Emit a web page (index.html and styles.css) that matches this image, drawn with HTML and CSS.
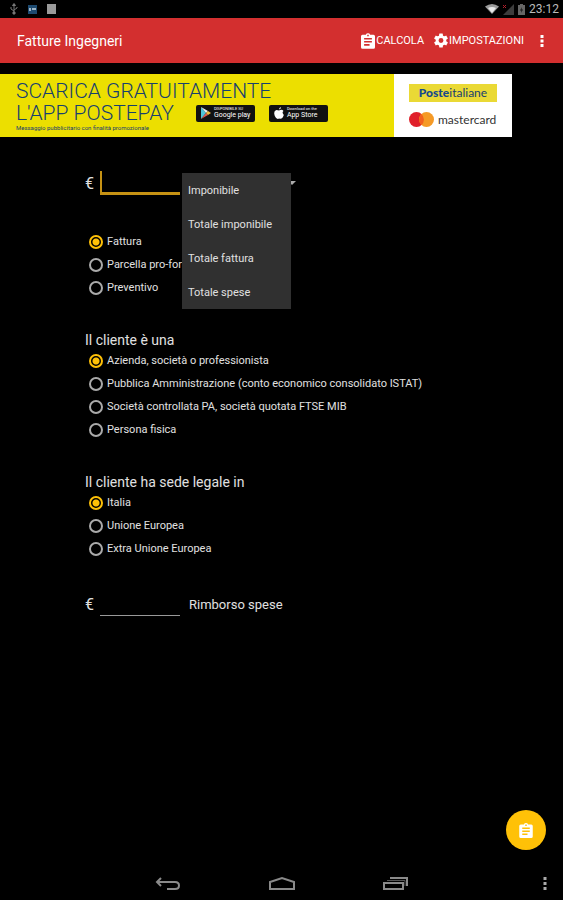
FILE: index.html
```
<!doctype html>
<html lang="it">
<head>
  <meta charset="UTF-8" />
  <meta name="viewport" content="width=device-width, initial-scale=1.0" />
  <title>Fatture Ingegneri</title>
  <link rel="stylesheet" href="styles.css">
</head>
<body>
  <div class="statusbar">
    <div class="status-group">
      <svg width="8" height="12" viewBox="0 0 8 12" fill="none" stroke="#777" stroke-width="1"><path d="M4 1v10M1 4v2l3 2M7 4v1L4 7" /><path d="M2.500 2.500L4 .5l1.500 2zM3 9h2v2H3z" fill="#777" /></svg>
      <svg width="9" height="9" viewBox="0 0 9 9"><path fill="#1d4a70" d="M0 0h9v9H0z" /><path fill="#9db4c6" d="M1 3h2v3H1zM4 3h4v2H4z" /></svg>
      <svg width="9" height="10" viewBox="0 0 9 10"><path fill="#9a9a9a" d="M0 0h9v10H0z" /></svg>
    </div>
    <div class="status-group status-right">
      <svg width="14" height="10" viewBox="0 0 14 10"><path fill="#999" d="M0 2.500Q7-2.500 14 2.500L7 10z" /><path fill="#e8e8e8" d="M3 4q4-2 8 0L7 9z" /></svg>
      <svg width="11" height="11" viewBox="0 0 11 11"><path fill="#3c3c3c" d="M11 0v11H0z" /><path stroke="#b3202c" d="M0 1l3 3M3 1L0 4" /></svg>
      <svg width="7" height="11" viewBox="0 0 7 11"><path fill="#666" d="M2 0h3v1h2v10H0V1h2z" /><path fill="#111" d="M4 3L2 6.500h1.500L3 9l2-3.500H3.500z" /></svg>
      <span class="clock">23:12</span>
    </div>
  </div>

  <header class="appbar">
    <h1>Fatture Ingegneri</h1>
    <button class="action" type="button">
      <svg width="14" height="16" viewBox="3 1 18 20"><path fill="#fff" d="M19 3h-4.200a3 3 0 0 0-5.600 0H5a2 2 0 0 0-2 2v14a2 2 0 0 0 2 2h14a2 2 0 0 0 2-2V5a2 2 0 0 0-2-2z" /><path fill="#d32f2f" d="M11 3h2v2h-2zM7 7h10v2H7zM7 11h10v2H7zM7 15h7v2H7z" /></svg>Calcola
    </button>
    <button class="action" type="button">
      <svg width="14" height="15" viewBox="2 2 20 20"><path fill="#fff" d="M19.430 12.980c.04-.32.07-.64.07-.98s-.03-.66-.07-.98l2.110-1.650a.5.5 0 0 0 .12-.64l-2-3.460a.5.500 0 0 0-.61-.22l-2.490 1a7.300 7.300 0 0 0-1.690-.98l-.38-2.650A.5.500 0 0 0 14 2h-4a.5.5 0 0 0-.49.42l-.38 2.650c-.61.25-1.170.59-1.690.98l-2.490-1a.5.5 0 0 0-.61.22l-2 3.460a.5.5 0 0 0 .12.640l2.110 1.650c-.04.32-.07.65-.07.98s.03.66.07.98l-2.110 1.650a.5.5 0 0 0-.12.640l2 3.460c.12.22.39.3.61.22l2.490-1c.52.4 1.080.73 1.690.98l.38 2.650c.03.24.24.42.49.42h4c.25 0 .46-.18.49-.42l.38-2.650c.61-.25 1.170-.59 1.690-.98l2.490 1c.23.09.49 0 .61-.22l2-3.460a.5.5 0 0 0-.12-.64zM12 15.500a3.500 3.500 0 1 1 0-7 3.500 3.500 0 0 1 0 7z" /></svg>Impostazioni
    </button>
    <button class="more" type="button" aria-label="Altro">
      <svg width="4" height="12" viewBox="0 0 4 12" fill="#fff"><path d="M.5 0h3v3h-3zM.5 4.500h3v3h-3zM.5 9h3v3h-3z" /></svg>
    </button>
  </header>

  <a class="banner" href="#">
    <span class="promo">
      <span class="promo-line">SCARICA GRATUITAMENTE</span>
      <span class="promo-line">L'APP POSTEPAY
        <span class="store">
          <svg width="10" height="12" viewBox="0 0 10 12"><path fill="#4fc3d9" d="M0 0v12l5-6z" /><path fill="#e0574f" d="M0 12l5-6 2 2z" /><path fill="#e9eef0" d="M0 0l7 4-2 2z" /><path fill="#f0b840" d="M7 4l3 2-3 2-2-2z" /></svg>
          <span class="store-text"><small>DISPONIBILE SU</small><span>Google play</span></span>
        </span>
        <span class="store">
          <svg width="10" height="12" viewBox="0 0 10 12" fill="#fff"><path d="M7 0q0 2-2 2.500Q5 .5 7 0zM5 3.500Q8 2 9.500 4 7.500 5.500 9.800 8 8 13 5.200 11.500 2.500 13 .8 9-1 4 2.500 3q1.500 0 2.500.5z" /></svg>
          <span class="store-text"><small>Download on the</small><span>App Store</span></span>
        </span>
      </span>
      <span class="promo-note">Messaggio pubblicitario con finalità promozionale</span>
    </span>
    <span class="brands">
      <span class="poste"><b>Poste</b>italiane</span>
      <span class="mastercard">
        <svg width="25" height="15" viewBox="0 0 25 15"><circle cx="7.500" cy="7.500" r="7.500" fill="#e0202b" /><circle cx="17.500" cy="7.500" r="7.500" fill="#f59a26" /><path fill="#f2601f" d="M12.500 2a7.500 7.500 0 0 1 0 11 7.500 7.500 0 0 1 0-11z" /></svg>
        mastercard
      </span>
    </span>
  </a>

  <form class="invoice">
    <div class="amount-row">
      <label class="amount amount-active"><span class="euro">€</span><input type="text" inputmode="decimal" aria-label="Importo"></label>
      <div class="picker">
        <select aria-label="Tipo di importo">
          <option>Imponibile</option>
          <option>Totale imponibile</option>
          <option>Totale fattura</option>
          <option>Totale spese</option>
        </select>
        <svg class="picker-arrow" width="8" height="4" viewBox="0 0 8 4"><path fill="#aaa" d="M0 0h8L4 4z" /></svg>
        <div class="menu">
          <button type="button">Imponibile</button>
          <button type="button">Totale imponibile</button>
          <button type="button">Totale fattura</button>
          <button type="button">Totale spese</button>
        </div>
      </div>
    </div>

    <fieldset aria-label="Documento">
      <label class="option"><input type="radio" name="documento" checked>Fattura</label>
      <label class="option"><input type="radio" name="documento">Parcella pro-forma</label>
      <label class="option"><input type="radio" name="documento">Preventivo</label>
    </fieldset>

    <fieldset>
      <legend>Il cliente è una</legend>
      <label class="option"><input type="radio" name="cliente" checked>Azienda, società o professionista</label>
      <label class="option"><input type="radio" name="cliente">Pubblica Amministrazione (conto economico consolidato ISTAT)</label>
      <label class="option"><input type="radio" name="cliente">Società controllata PA, società quotata FTSE MIB</label>
      <label class="option"><input type="radio" name="cliente">Persona fisica</label>
    </fieldset>

    <fieldset>
      <legend>Il cliente ha sede legale in</legend>
      <label class="option"><input type="radio" name="sede" checked>Italia</label>
      <label class="option"><input type="radio" name="sede">Unione Europea</label>
      <label class="option"><input type="radio" name="sede">Extra Unione Europea</label>
    </fieldset>

    <label class="amount"><span class="euro">€</span><input type="text" inputmode="decimal"><span class="amount-name">Rimborso spese</span></label>
  </form>

  <button class="fab" type="button" aria-label="Calcola">
    <svg width="14" height="15" viewBox="3 1 18 20"><path fill="#fff" d="M19 3h-4.200a3 3 0 0 0-5.600 0H5a2 2 0 0 0-2 2v14a2 2 0 0 0 2 2h14a2 2 0 0 0 2-2V5a2 2 0 0 0-2-2z" /><path fill="#ffc107" d="M11 3h2v2h-2zM7 7h10v2H7zM7 11h10v2H7zM7 15h7v2H7z" /></svg>
  </button>

  <nav class="navbar">
    <span></span>
    <div class="nav-keys">
      <button type="button" aria-label="Indietro"><svg width="26" height="16" viewBox="0 0 26 16" fill="none" stroke="#8a8a8a" stroke-width="2"><path d="M6 2L2 6l4 4M2 6h18q4 0 4 3.500T20 13h-8" /></svg></button>
      <button type="button" aria-label="Home"><svg width="26" height="16" viewBox="0 0 26 16" fill="none" stroke="#8a8a8a" stroke-width="2"><path d="M1 13V6l12-4 12 4v7z" /></svg></button>
      <button type="button" aria-label="Recenti"><svg width="26" height="16" viewBox="0 0 26 16" fill="none" stroke="#8a8a8a" stroke-width="2"><path d="M1 7h19v6H1zM7 2h17v8" /><path d="M4 4.500h18V10" stroke="#555" stroke-width="1" /></svg></button>
    </div>
    <button class="nav-more" type="button" aria-label="Menu"><svg width="4" height="14" viewBox="0 0 4 14" fill="#aaa"><path d="M.5 0h3v3h-3zM.5 5h3v3h-3zM.5 10h3v3h-3z" /></svg></button>
  </nav>
</body>
</html>
```
FILE: styles.css
```
:root {
  --red: #d32f2f;
  --amber: #ffc107;
  --line: #c69214;
  --ink: #e0e0e0;
  --yellow: #ecdf00;
  --blue: #17406f;
}

* { box-sizing: border-box; }

body {
  margin: 0;
  min-height: 100vh;
  display: flex;
  flex-direction: column;
  background: #000;
  color: var(--ink);
  font-family: Roboto, "Liberation Sans", sans-serif;
  font-size: 11px;
}

button, input, select {
  font: inherit;
  color: inherit;
}

button {
  border: 0;
  padding: 0;
  background: none;
  cursor: pointer;
}

svg {
  display: block;
  flex: none;
}

.statusbar {
  height: 18px;
  padding: 0 4px 0 10px;
  display: flex;
  justify-content: space-between;
}

.status-group {
  display: flex;
  align-items: center;
  gap: 10px;
}

.status-right { gap: 4px; }

.clock {
  font-size: 12px;
  color: #bbb;
}

.appbar {
  height: 45px;
  padding: 0 19px 0 17px;
  display: flex;
  align-items: center;
  gap: 10px;
  background: var(--red);
  color: #fff;
}

h1 {
  margin: 0;
  flex: 1;
  font-size: 14px;
  font-weight: 400;
}

.action {
  display: flex;
  align-items: center;
  gap: 1px;
  text-transform: uppercase;
}

.more { margin-left: 6px; }

.banner {
  width: 100%;
  max-width: 512px;
  height: 63px;
  margin-top: 11px;
  display: flex;
  text-decoration: none;
  background: var(--yellow);
  color: var(--blue);
}

.promo {
  flex: 1;
  padding: 6px 0 0 16px;
}

.promo-line {
  display: flex;
  align-items: center;
  height: 22px;
  font-size: 21px;
  font-weight: 300;
  white-space: nowrap;
}

.promo-note {
  display: block;
  font-size: 6px;
  line-height: 8px;
}

.store {
  display: flex;
  align-items: center;
  gap: 3px;
  width: 59px;
  height: 17px;
  margin-left: 22px;
  padding-left: 5px;
  border-radius: 2px;
  background: #111;
  color: #fff;
  font-weight: 400;
}

.store + .store { margin-left: 14px; }

.store-text {
  font-size: 7px;
  line-height: 8px;
}

.store-text small {
  display: block;
  font-size: 4px;
  line-height: 4px;
}

.brands {
  width: 118px;
  padding: 10px 15px;
  background: #fff;
}

.poste {
  display: block;
  height: 18px;
  background: #ead935;
  font-family: Lato, sans-serif;
  font-size: 12px;
  line-height: 18px;
  text-align: center;
}

.poste b {
  font-weight: 900;
  color: #17498c;
}

.mastercard {
  display: flex;
  align-items: center;
  gap: 4px;
  margin-top: 10px;
  font-family: Lato, sans-serif;
  font-size: 12px;
  line-height: 15px;
  color: #333;
}

.invoice {
  flex: 1;
  padding: 34px 16px 32px 85px;
}

.amount-row {
  display: flex;
  gap: 2px;
  margin-bottom: 35px;
}

.amount {
  position: relative;
  display: flex;
  align-items: center;
  height: 24px;
}

.euro {
  width: 15px;
  font-size: 16px;
}

.amount input {
  width: 80px;
  height: 24px;
  padding: 0 4px;
  border: 0;
  border-bottom: 1px solid #999;
  outline: none;
  background: none;
}

.amount-active input { border-bottom: 3px solid var(--line); }

/* text cursor of the field being edited */
.amount-active::after {
  content: "";
  position: absolute;
  left: 15px;
  top: 0;
  width: 2px;
  height: 24px;
  background: var(--line);
}

.amount-name {
  margin-left: 9px;
  font-size: 13px;
}

.picker {
  position: relative;
  width: 114px;
}

.picker select {
  width: 100%;
  height: 24px;
  padding: 0 6px;
  border: 0;
  appearance: none;
  background: none;
}

.picker-arrow {
  position: absolute;
  right: 0;
  top: 10px;
}

.menu {
  position: absolute;
  left: 0;
  top: 2px;
  width: 109px;
  background: #303030;
}

.menu button {
  display: block;
  width: 100%;
  height: 34px;
  padding: 0 6px;
  text-align: left;
}

fieldset {
  margin: 0 0 32px;
  padding: 0;
  border: 0;
}

legend {
  padding: 0;
  font-size: 14px;
  line-height: 18px;
}

.option {
  display: flex;
  align-items: center;
  gap: 4px;
  height: 23px;
  padding-left: 4px;
}

.option input {
  appearance: none;
  width: 14px;
  height: 14px;
  margin: 0;
  border: 2px solid #aaa;
  border-radius: 50%;
}

.option input:checked {
  border-color: var(--amber);
  background: radial-gradient(circle, var(--amber) 3px, transparent 4px);
}

.fab {
  position: fixed;
  right: 17px;
  bottom: 50px;
  width: 40px;
  height: 40px;
  display: flex;
  align-items: center;
  justify-content: center;
  border-radius: 50%;
  background: var(--amber);
}

.navbar {
  display: grid;
  grid-template-columns: 1fr auto 1fr;
  align-items: center;
  height: 32px;
  padding: 0 16px;
}

.nav-keys {
  display: flex;
  gap: 88px;
}

.nav-more { justify-self: end; }
```
